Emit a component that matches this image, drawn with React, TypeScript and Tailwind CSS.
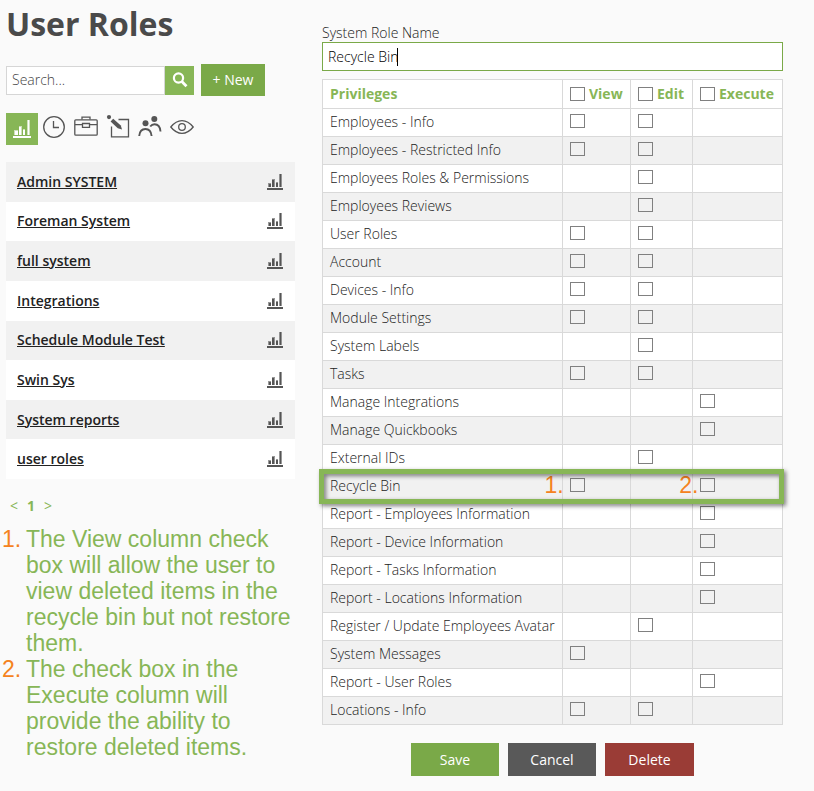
import type { ReactNode } from "react";

const roles = [
  "Admin SYSTEM",
  "Foreman System",
  "full system",
  "Integrations",
  "Schedule Module Test",
  "Swin Sys",
  "System reports",
  "user roles",
];

const columns = ["View", "Edit", "Execute"];

// v = view, e = edit, x = execute
const privileges = [
  { name: "Employees - Info", boxes: "ve" },
  { name: "Employees - Restricted Info", boxes: "ve" },
  { name: "Employees Roles & Permissions", boxes: "e" },
  { name: "Employees Reviews", boxes: "e" },
  { name: "User Roles", boxes: "ve" },
  { name: "Account", boxes: "ve" },
  { name: "Devices - Info", boxes: "ve" },
  { name: "Module Settings", boxes: "ve" },
  { name: "System Labels", boxes: "e" },
  { name: "Tasks", boxes: "ve" },
  { name: "Manage Integrations", boxes: "x" },
  { name: "Manage Quickbooks", boxes: "x" },
  { name: "External IDs", boxes: "e" },
  { name: "Recycle Bin", boxes: "vx", highlight: true },
  { name: "Report - Employees Information", boxes: "x" },
  { name: "Report - Device Information", boxes: "x" },
  { name: "Report - Tasks Information", boxes: "x" },
  { name: "Report - Locations Information", boxes: "x" },
  { name: "Register / Update Employees Avatar", boxes: "e" },
  { name: "System Messages", boxes: "v" },
  { name: "Report - User Roles", boxes: "x" },
  { name: "Locations - Info", boxes: "ve" },
];

const notes = [
  "The View column check box will allow the user to view deleted items in the recycle bin but not restore them.",
  "The check box in the Execute column will provide the ability to restore deleted items.",
];

function ChartIcon({ className }: { className?: string }) {
  return (
    <svg viewBox="0 0 16 16" className={className} fill="currentColor" shapeRendering="crispEdges">
      <path d="M0 14h16v2H0z" />
      <path d="M1 9h3v4H1zM5 5h3v8H5zM9 8h2v5H9zM12 0h3v13h-3z" opacity="0.6" />
      <path d="M2 10h2v3H2zM5 6h2v7H5zM9 9h2v4H9zM13 0h1v13h-1z" />
    </svg>
  );
}

function ClockIcon() {
  return (
    <svg viewBox="0 0 24 24" className="size-6" fill="none" stroke="currentColor" strokeWidth="1.3">
      <circle cx="12" cy="12" r="10.3" />
      <path d="M11.5 6v6.5H17" />
    </svg>
  );
}

function BriefcaseIcon() {
  return (
    <svg viewBox="0 0 24 24" className="size-6" fill="none" stroke="currentColor" strokeWidth="1.3">
      <rect x="0.8" y="4.8" width="22.4" height="15.4" rx="1" />
      <path d="M8 4.5V2.2h8v2.3M1 9.6h7.5M15.5 9.6H23M8.5 8.5h7v3.8h-7z" />
    </svg>
  );
}

function EditIcon() {
  return (
    <svg viewBox="0 0 24 24" className="size-6" fill="none" stroke="currentColor" strokeWidth="1.3">
      <path d="M12.5 4.5h10v17.3h-17V11.5" />
      <circle cx="3" cy="2.1" r="2.1" fill="currentColor" stroke="none" />
      <path d="M4.6 6.4l2.6-2.6 7.6 6.6 1.2 4-4.2-1.2z" fill="currentColor" stroke="none" />
    </svg>
  );
}

function UsersIcon() {
  return (
    <svg viewBox="0 0 24 24" className="size-6" fill="none" stroke="currentColor" strokeWidth="1.9">
      <circle cx="7.5" cy="8.3" r="3" fill="currentColor" stroke="none" />
      <circle cx="16.3" cy="4" r="3" fill="currentColor" stroke="none" />
      <path d="M1.2 21c.4-4.5 2.9-7 6.2-7s5.8 2.5 6.2 7" />
      <path d="M12.2 11.5c1.2-1.5 2.6-2.2 4.3-2.2 3.3 0 5.6 2.6 6 7.2" />
    </svg>
  );
}

function EyeIcon() {
  return (
    <svg viewBox="0 0 24 24" className="size-6" fill="none" stroke="currentColor" strokeWidth="1.3">
      <path d="M.8 12C4.2 7.7 8 5.6 12 5.6S19.8 7.7 23.2 12C19.8 16.3 16 18.4 12 18.4S4.2 16.3.8 12z" />
      <circle cx="12" cy="12" r="3.3" />
    </svg>
  );
}

function SearchIcon() {
  return (
    <svg viewBox="0 0 16 16" className="size-4" fill="none" stroke="currentColor">
      <circle cx="6.5" cy="6" r="4.6" strokeWidth="2.2" />
      <path d="M9.8 9.4l4.7 4.8" strokeWidth="2.8" />
    </svg>
  );
}

const filters: { label: string; icon: ReactNode }[] = [
  { label: "Time", icon: <ClockIcon /> },
  { label: "Jobs", icon: <BriefcaseIcon /> },
  { label: "Edit", icon: <EditIcon /> },
  { label: "Users", icon: <UsersIcon /> },
  { label: "View", icon: <EyeIcon /> },
];

function Checkbox({ id, label }: { id?: string; label?: string }) {
  return (
    <input
      type="checkbox"
      id={id}
      aria-label={label}
      className="block h-[14px] w-[15px] shrink-0 appearance-none border border-[#808080] bg-transparent checked:bg-[#87b656]"
    />
  );
}

function Sidebar() {
  return (
    <aside className="w-[289px] shrink-0">
      <h1 className="pt-0.5 text-[32px] leading-[44px] font-bold text-[#4a4a4a]">User Roles</h1>

      <div className="mt-[18px] flex items-center">
        <input
          type="text"
          aria-label="Search"
          placeholder="Search..."
          className="h-[29px] w-[159px] border border-[#d6d6d6] bg-white px-[5px] pb-0.5 text-sm font-light outline-none placeholder:text-[#444]"
        />
        <button aria-label="Search" className="flex h-[29px] w-[29px] items-center justify-center bg-[#87b656] text-white">
          <SearchIcon />
        </button>
        <button className="ml-[7px] h-8 w-16 bg-[#7aa948] text-sm text-white">+ New</button>
      </div>

      <div className="mt-[17px] flex items-center gap-1 text-[#555]">
        <button aria-label="Reports" className="flex size-8 items-center justify-center bg-[#87b656] text-white">
          <ChartIcon className="size-[18px]" />
        </button>
        <div className="flex items-center gap-2 pb-1">
          {filters.map((filter) => (
            <button key={filter.label} aria-label={filter.label}>
              {filter.icon}
            </button>
          ))}
        </div>
      </div>

      <ul className="mt-[17px] flex h-[317px] flex-col">
        {roles.map((role) => (
          <li key={role} className="flex flex-1 items-center justify-between bg-white pr-3 pl-[11px] odd:bg-[#f1f1f1]">
            <a href="#" className="text-sm font-semibold text-[#222] underline">
              {role}
            </a>
            <ChartIcon className="size-4 text-[#555]" />
          </li>
        ))}
      </ul>

      <nav aria-label="Pages" className="mt-[17px] flex gap-[9px] pl-1 text-sm leading-5 text-[#87b656]">
        <a href="#">&lt;</a>
        <a href="#" className="font-bold">1</a>
        <a href="#">&gt;</a>
      </nav>

      <ol className="mt-[10px] font-['Liberation_Sans',Arial,sans-serif] text-[23px] leading-[26px] text-[#87b656]">
        {notes.map((note, index) => (
          <li key={note} className="flex">
            <span className="-ml-1 w-6 shrink-0 text-[#f58220]">{index + 1}.</span>
            <span className="-mr-2">{note}</span>
          </li>
        ))}
      </ol>
    </aside>
  );
}

function PrivilegesTable() {
  return (
    <table className="mt-2 w-full table-fixed border-collapse text-sm leading-5">
      <colgroup>
        <col />
        <col className="w-[68px]" />
        <col className="w-[62px]" />
        <col className="w-[90px]" />
      </colgroup>
      <thead>
        <tr className="h-[29px] bg-white text-[#87b656]">
          <th className="border border-[#d9d9d9] px-[7px] text-left font-bold">Privileges</th>
          {columns.map((column) => (
            <th key={column} className="border border-[#d9d9d9] px-[7px] text-left font-bold">
              <label htmlFor={`all-${column}`} className="flex items-center gap-1">
                <Checkbox id={`all-${column}`} />
                {column}
              </label>
            </th>
          ))}
        </tr>
      </thead>
      <tbody>
        {privileges.map((row) => (
          <tr key={row.name} className="relative h-7 bg-white text-[#222] even:bg-[#f1f1f1]">
            <td className="border border-[#d9d9d9] px-[7px] pb-0.5 font-light whitespace-nowrap">
              {row.name}
              {row.highlight && (
                <>
                  <div className="pointer-events-none absolute -top-1 right-[-1px] -bottom-[3px] -left-1 z-10 border-[5px] border-[#87b656] drop-shadow-[2px_2px_2px_rgba(0,0,0,0.5)]" />
                  <span className="absolute -top-0.5 left-[222px] font-['Liberation_Sans',Arial,sans-serif] text-[23px] leading-7 font-normal text-[#f58220]">
                    1.
                  </span>
                  <span className="absolute -top-0.5 right-[84px] font-['Liberation_Sans',Arial,sans-serif] text-[23px] leading-7 font-normal text-[#f58220]">
                    2.
                  </span>
                </>
              )}
            </td>
            {["v", "e", "x"].map((key, index) => (
              <td key={key} className="border border-[#d9d9d9] px-[7px] pb-[3px]">
                {row.boxes.includes(key) && <Checkbox label={`${row.name} ${columns[index]}`} />}
              </td>
            ))}
          </tr>
        ))}
      </tbody>
    </table>
  );
}

export default function App() {
  return (
    <div className="flex min-h-screen items-start gap-[27px] bg-[#fafafa] pr-[31px] pl-1.5 font-['Open_Sans',sans-serif]">
      <Sidebar />

      <main className="min-w-0 flex-1 pt-[23px]">
        <label htmlFor="role-name" className="block text-sm leading-[19px] font-light text-[#222]">
          System Role Name
        </label>
        <div className="relative">
          <input
            id="role-name"
            type="text"
            defaultValue="Recycle Bin"
            className="block h-[29px] w-full border border-[#7aa948] bg-white px-[5px] text-sm font-light text-black caret-transparent outline-none"
          />
          <span className="absolute top-1.5 left-[75px] h-[18px] w-px bg-black" />
        </div>

        <PrivilegesTable />

        <div className="mt-[18px] flex justify-center gap-[9px] text-sm text-white">
          <button className="h-[33px] w-[88px] bg-[#7aa948]">Save</button>
          <button className="h-[33px] w-[88px] bg-[#595959]">Cancel</button>
          <button className="h-[33px] w-[89px] bg-[#9a3c36]">Delete</button>
        </div>
      </main>
    </div>
  );
}
